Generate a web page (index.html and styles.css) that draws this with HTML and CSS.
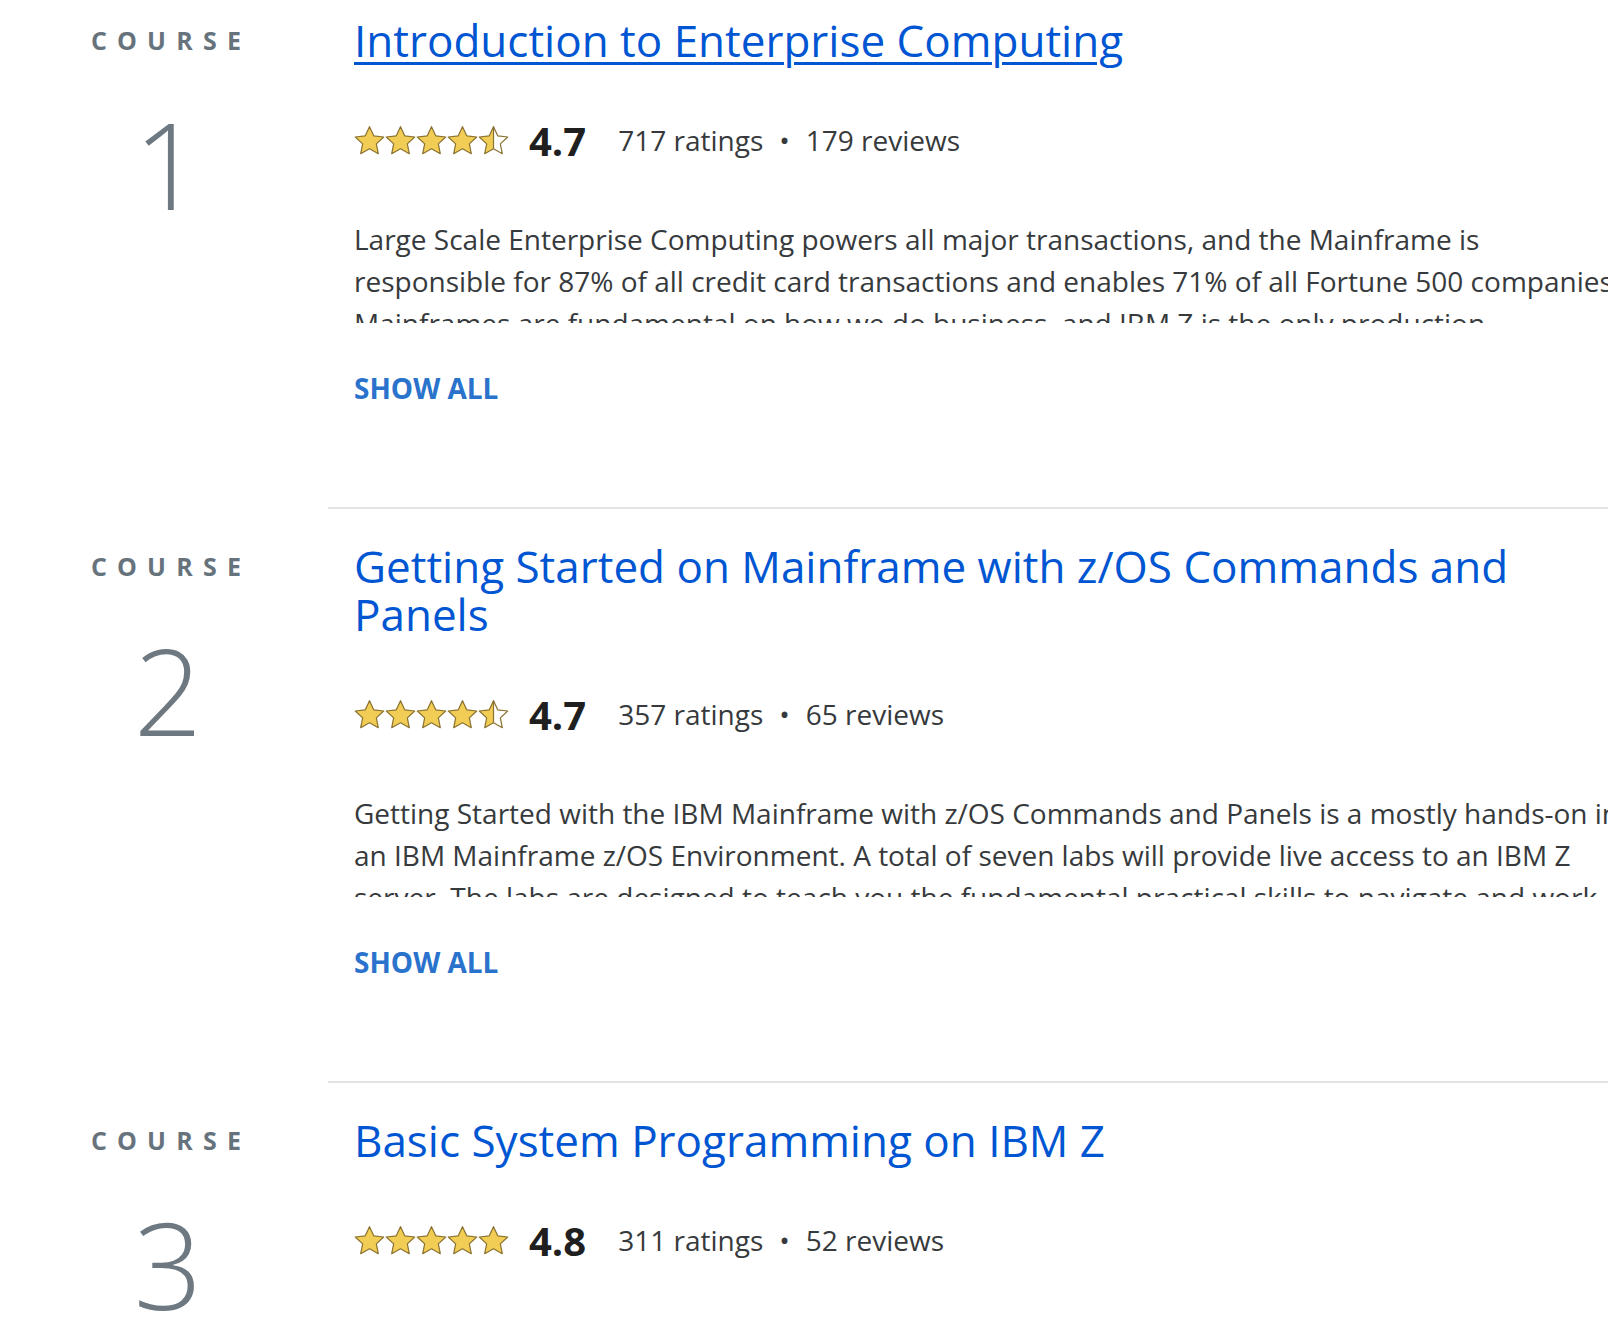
FILE: index.html
```html
<!DOCTYPE html>
<html lang="en">
<head>
<meta charset="utf-8">
<title>Courses</title>
<link rel="stylesheet" href="styles.css">
</head>
<body>
<svg class="svg-defs" width="0" height="0" aria-hidden="true">
  <defs>
    <linearGradient id="halfFill" x1="0" y1="0" x2="1" y2="0">
      <stop offset="50%" stop-color="#f2cd56"/>
      <stop offset="50%" stop-color="#ffffff"/>
    </linearGradient>
    <symbol id="star" viewBox="0 0 28 28">
      <polygon points="14,1.5 17.82,9.74 26.84,10.83 20.18,17.01 21.94,25.92 14,21.5 6.06,25.92 7.82,17.01 1.16,10.83 10.18,9.74"/>
    </symbol>
  </defs>
</svg>

<main class="course-list">
  <section class="course">
    <div class="course-index">
      <div class="course-label">COURSE</div>
      <div class="course-number">1</div>
    </div>
    <div class="course-body">
      <h2 class="course-title"><a class="is-hover" href="#">Introduction to Enterprise Computing</a></h2>
      <div class="rating">
        <div class="stars">
          <svg class="star"><use href="#star"/></svg>
          <svg class="star"><use href="#star"/></svg>
          <svg class="star"><use href="#star"/></svg>
          <svg class="star"><use href="#star"/></svg>
          <svg class="star half" viewBox="0 0 28 28"><polygon points="14,1.5 17.82,9.74 26.84,10.83 20.18,17.01 21.94,25.92 14,21.5 6.06,25.92 7.82,17.01 1.16,10.83 10.18,9.74"/><line x1="14" y1="1.5" x2="14" y2="21.5"/></svg>
        </div>
        <span class="score">4.7</span>
        <span class="count">717 ratings</span>
        <span class="dot">•</span>
        <span class="count">179 reviews</span>
      </div>
      <div class="desc">
        <p>Large Scale Enterprise Computing powers all major transactions, and the Mainframe is responsible for 87% of all credit card transactions and enables 71% of all Fortune 500 companies. Mainframes are fundamental on how we do business, and IBM Z is the only production environment that can deliver the scale and security required by the world's largest businesses.</p>
      </div>
      <button class="show-all" type="button">SHOW ALL</button>
    </div>
  </section>

  <section class="course">
    <div class="course-index">
      <div class="course-label">COURSE</div>
      <div class="course-number">2</div>
    </div>
    <div class="course-body">
      <h2 class="course-title"><a href="#">Getting Started on Mainframe with z/OS Commands and Panels</a></h2>
      <div class="rating">
        <div class="stars">
          <svg class="star"><use href="#star"/></svg>
          <svg class="star"><use href="#star"/></svg>
          <svg class="star"><use href="#star"/></svg>
          <svg class="star"><use href="#star"/></svg>
          <svg class="star half" viewBox="0 0 28 28"><polygon points="14,1.5 17.82,9.74 26.84,10.83 20.18,17.01 21.94,25.92 14,21.5 6.06,25.92 7.82,17.01 1.16,10.83 10.18,9.74"/><line x1="14" y1="1.5" x2="14" y2="21.5"/></svg>
        </div>
        <span class="score">4.7</span>
        <span class="count">357 ratings</span>
        <span class="dot">•</span>
        <span class="count">65 reviews</span>
      </div>
      <div class="desc">
        <p>Getting Started with the IBM Mainframe with z/OS Commands and Panels is a mostly hands-on in an IBM Mainframe z/OS Environment. A total of seven labs will provide live access to an IBM Z server. The labs are designed to teach you the fundamental practical skills to navigate and work with z/OS.</p>
      </div>
      <button class="show-all" type="button">SHOW ALL</button>
    </div>
  </section>

  <section class="course">
    <div class="course-index">
      <div class="course-label">COURSE</div>
      <div class="course-number">3</div>
    </div>
    <div class="course-body">
      <h2 class="course-title"><a href="#">Basic System Programming on IBM Z</a></h2>
      <div class="rating">
        <div class="stars">
          <svg class="star"><use href="#star"/></svg>
          <svg class="star"><use href="#star"/></svg>
          <svg class="star"><use href="#star"/></svg>
          <svg class="star"><use href="#star"/></svg>
          <svg class="star"><use href="#star"/></svg>
        </div>
        <span class="score">4.8</span>
        <span class="count">311 ratings</span>
        <span class="dot">•</span>
        <span class="count">52 reviews</span>
      </div>
      <div class="desc">
        <p>Basic System Programming on IBM Z teaches the fundamental skills of a z/OS system programmer.</p>
      </div>
      <button class="show-all" type="button">SHOW ALL</button>
    </div>
  </section>
</main>
</body>
</html>
```

FILE: styles.css
```css
html, body {
  margin: 0;
  padding: 0;
  background: #ffffff;
  overflow: hidden;
}

body {
  font-family: "Open Sans", "Noto Sans", "Liberation Sans", sans-serif;
  color: #373a3c;
  width: 1626px;
}

.svg-defs {
  position: absolute;
  width: 0;
  height: 0;
  overflow: hidden;
}

.course-list {
  margin-top: -19px;
}

.course {
  display: grid;
  grid-template-columns: 328px 1fr;
}

.course-index {
  padding: 35px 0 0 8px;
  text-align: center;
}

.course-label {
  font-size: 25px;
  font-weight: 700;
  line-height: 48px;
  letter-spacing: 10.2px;
  padding-left: 6px;
  color: #67737c;
}

.course-number {
  margin-top: 40px;
  font-size: 120px;
  font-weight: 300;
  line-height: 120px;
  color: #6d7880;
}

.course-body {
  border-top: 2px solid #e3e3e3;
  padding: 33px 0 99px 26px;
  min-width: 0;
}

.course-title {
  margin: 0;
  font-size: 44px;
  font-weight: 400;
  line-height: 48px;
}

.course-title a {
  color: #0056d2;
  text-decoration: none;
}

.course-title a.is-hover {
  text-decoration: underline;
  text-decoration-thickness: 3px;
  text-underline-offset: 5px;
}

.rating {
  display: flex;
  align-items: center;
  height: 40px;
  margin-top: 56px;
}

.stars {
  display: flex;
  gap: 0;
}

.star {
  width: 31px;
  height: 31px;
  fill: #f2cd56;
  stroke: #8a7230;
  stroke-width: 1.1;
  stroke-linejoin: round;
}

.star.half polygon {
  fill: url(#halfFill);
}

.star.half line {
  stroke: #8a7230;
  stroke-width: 1.1;
}

.score {
  margin-left: 20px;
  font-size: 40px;
  font-weight: 700;
  color: #1f1f1f;
}

.count {
  font-size: 28px;
  color: #373a3c;
}

.score + .count {
  margin-left: 32px;
}

.dot {
  font-size: 28px;
  margin: 0 16px;
  color: #373a3c;
}

.desc {
  margin-top: 58px;
  max-height: 105px;
  overflow: hidden;
}

.desc p {
  margin: 0;
  font-size: 28px;
  line-height: 42px;
  color: #373a3c;
}

.show-all {
  display: block;
  margin-top: 45px;
  padding: 0;
  border: 0;
  background: none;
  font-family: inherit;
  font-size: 28px;
  font-weight: 700;
  line-height: 40px;
  color: #2a73cc;
  cursor: pointer;
}
```
